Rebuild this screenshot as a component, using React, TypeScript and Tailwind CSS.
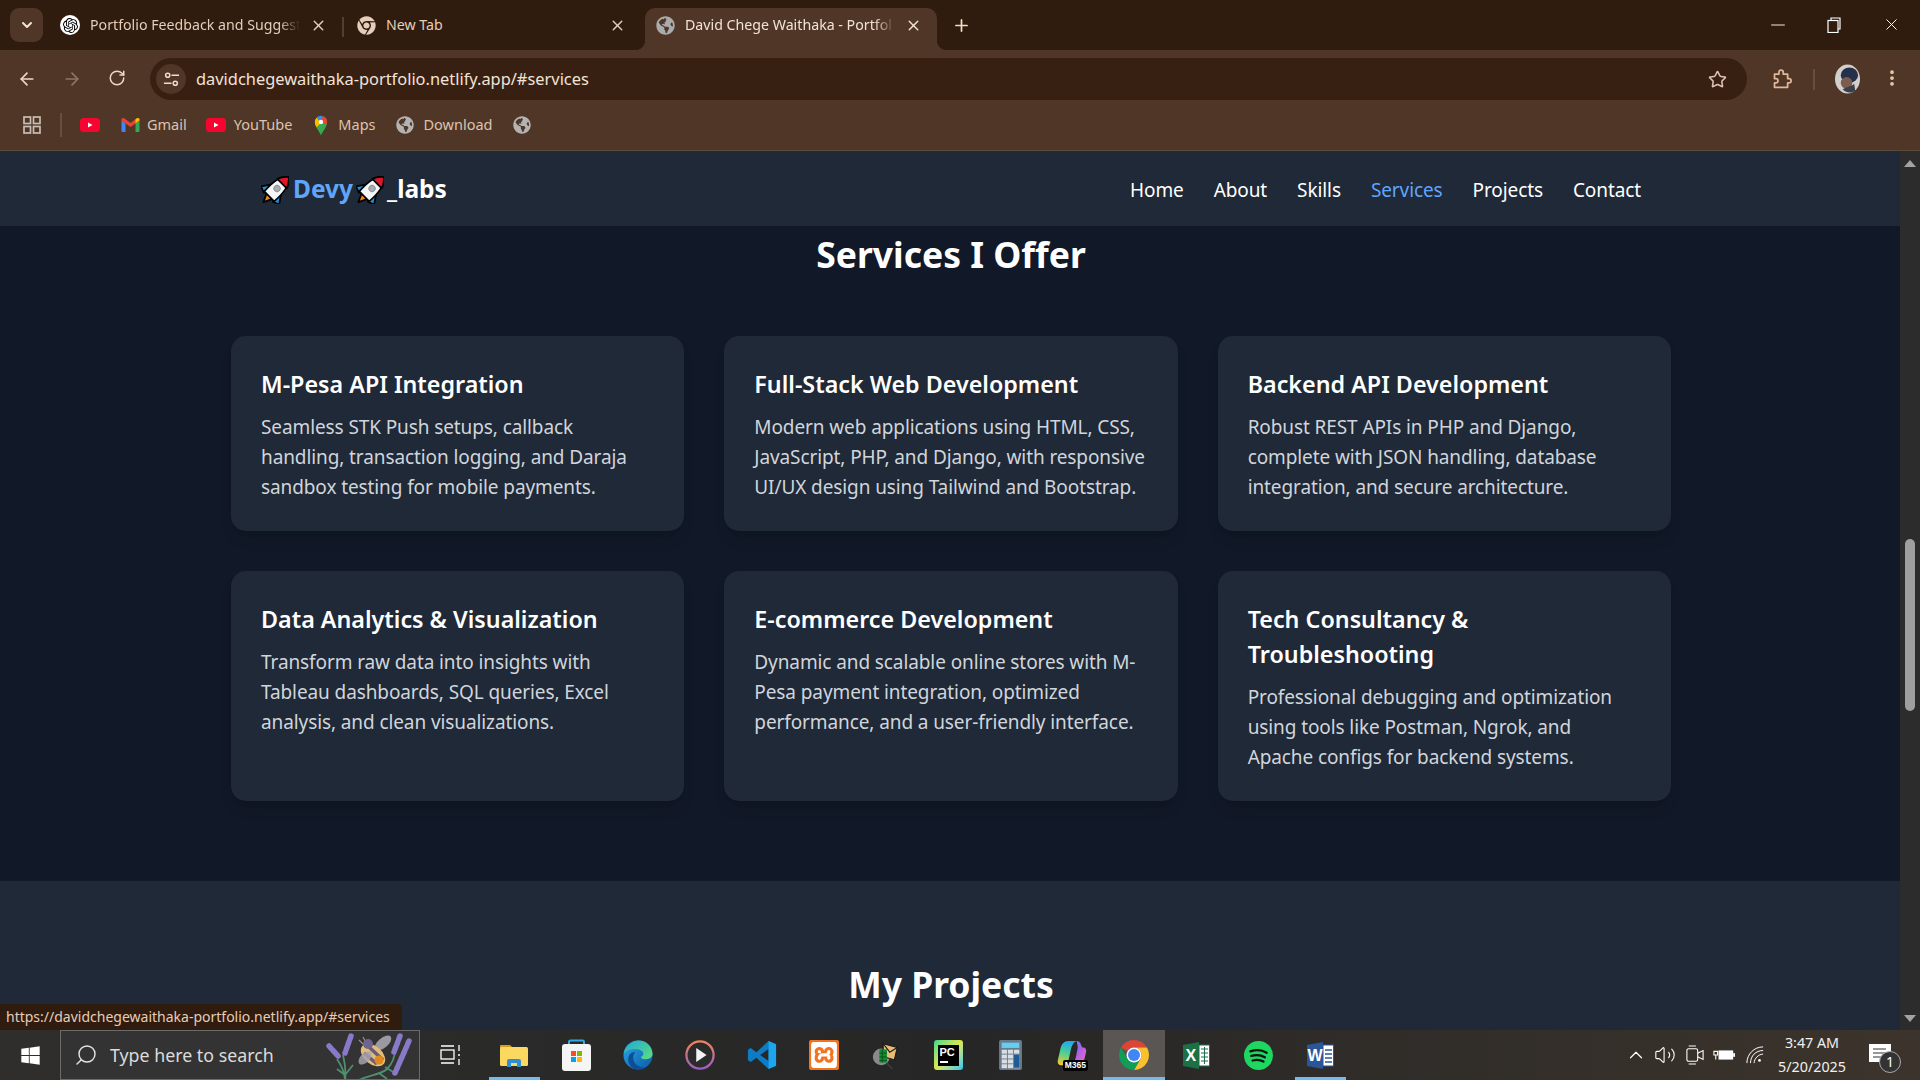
import React from "react";
import { ArrowLeft, ArrowRight, RotateCw, Star, EllipsisVertical, X, Plus, ChevronDown, Search, ChevronUp, Volume2, Minus } from "lucide-react";
import { FaGlobeAmericas, FaChrome, FaWindows } from "react-icons/fa";
import { SiOpenai, SiXampp } from "react-icons/si";

const services = [
  { t: "M-Pesa API Integration", d: "Seamless STK Push setups, callback handling, transaction logging, and Daraja sandbox testing for mobile payments." },
  { t: "Full-Stack Web Development", d: "Modern web applications using HTML, CSS, JavaScript, PHP, and Django, with responsive UI/UX design using Tailwind and Bootstrap." },
  { t: "Backend API Development", d: "Robust REST APIs in PHP and Django, complete with JSON handling, database integration, and secure architecture." },
  { t: "Data Analytics & Visualization", d: "Transform raw data into insights with Tableau dashboards, SQL queries, Excel analysis, and clean visualizations." },
  { t: "E-commerce Development", d: "Dynamic and scalable online stores with M-Pesa payment integration, optimized performance, and a user-friendly interface." },
  { t: "Tech Consultancy & Troubleshooting", d: "Professional debugging and optimization using tools like Postman, Ngrok, and Apache configs for backend systems." },
];

function Rocket() {
  return (
    <svg viewBox="1.500 1 24 24" className="w-[28px] h-[28px] shrink-0">
      <g transform="rotate(45 13.5 13.5)" stroke="#000" strokeWidth="1.500" strokeLinejoin="round">
        <path d="M10 20h7l-3.500 7.500z" fill="#f08a1c" />
        <path d="M8 11.500L2.500 19.500 8 21.500zM19 11.500l5.500 8-5.500 2z" fill="#1f8fe0" />
        <path d="M13.500 -3C18.500 .5 20.500 8 19.500 20.500h-12C6.500 8 8.500 .5 13.500 -3z" fill="#f4f6f8" />
        <path d="M13.500 -3C16.200 -1 18.200 2 19.200 5H7.800C8.800 2 10.800 -1 13.500 -3z" fill="#e0162b" />
        <circle cx="13.500" cy="11" r="2.800" fill="#a8adb3" strokeWidth=".6" stroke="#777" />
      </g>
    </svg>
  );
}

function YouTubeIcon() {
  return (
    <svg viewBox="0 0 20 14" className="w-[20px] h-[14px] shrink-0">
      <rect width="20" height="14" rx="3.500" fill="#f5052f" />
      <path d="M8 4.500l4.500 2.500L8 9.500z" fill="#fff" />
    </svg>
  );
}

function GmailIcon() {
  return (
    <svg viewBox="0 0 18 14" className="w-[19px] h-[14px] shrink-0">
      <path d="M0 2.500L4 5.500 9 9l5-3.500 4-3v-1C18 0 16-.5 15 .5L9 5 3 .5C2-.5 0 0 0 1.500z" fill="#ea4335" />
      <path d="M14 5.500l4-3v-1C18 0 16-.5 15 .5l-1 .8z" fill="#fbbc04" />
      <path d="M0 2.500V13a1 1 0 001 1h3V5.500z" fill="#4285f4" />
      <path d="M18 2.500V13a1 1 0 01-1 1h-3V5.500z" fill="#34a853" />
    </svg>
  );
}

function MapsIcon() {
  return (
    <svg viewBox="0 0 16 24" className="w-[14px] h-[21px] shrink-0">
      <path d="M8 23.500C6 18 1 14 1 8a7 7 0 0114 0c0 6-5 10-7 15.500z" fill="#34a853" />
      <path d="M3 3a7 7 0 017-1.700L8 8 5 5z" fill="#4285f4" />
      <path d="M10 1.300A7 7 0 0115 8c0 1-.2 2-.5 2.800L8 8z" fill="#ea4335" />
      <path d="M1 8c0 2 .8 4 2 6l5-5-5-6a7 7 0 00-2 5z" fill="#fbbc04" />
      <circle cx="8" cy="8" r="2.500" fill="#fff" />
    </svg>
  );
}

function ChromeLogo() {
  return (
    <svg viewBox="4 4 40 40" className="w-[30px] h-[30px]">
      <path d="M24 4a20 20 0 0117.320 10H24a10 10 0 00-8.660 5L6.680 14A20 20 0 0124 4z" fill="#db4437" />
      <path d="M41.320 14A20 20 0 0124 44l8.660-15A10 10 0 0024 14z" fill="#fbc02d" />
      <path d="M24 44A20 20 0 016.680 14l8.660 15a10 10 0 0017.320 0z" fill="#0f9d58" />
      <circle cx="24" cy="24" r="10" fill="#fff" />
      <circle cx="24" cy="24" r="8" fill="#4285f4" />
    </svg>
  );
}

const taskIcons: { key: string; el: React.ReactNode; active?: boolean; open?: boolean }[] = [
  {
    key: "explorer", open: true,
    el: (
      <svg viewBox="0 0 28 24" className="w-[28px] h-[24px]">
        <path d="M0 3a1 1 0 011-1h9l3 3H0z" fill="#d8a019" />
        <rect y="4" width="28" height="19" rx="1.500" fill="#fbd860" />
        <path d="M7 24v-6a2 2 0 012-2h10a2 2 0 012 2v6h-4v-4h-6v4z" fill="#2f8fd6" />
      </svg>
    ),
  },
  {
    key: "store",
    el: (
      <svg viewBox="0 0 29 32" className="w-[29px] h-[32px]">
        <path d="M7 8V3a1.500 1.500 0 011.500-1.500h12A1.500 1.500 0 0122 3v5" fill="none" stroke="#35a9e8" strokeWidth="2" />
        <rect y="5" width="29" height="27" rx="3" fill="#f5f5f5" />
        <rect x="9" y="12" width="5" height="5" fill="#f25022" />
        <rect x="15" y="12" width="5" height="5" fill="#7fba00" />
        <rect x="9" y="18" width="5" height="5" fill="#00a4ef" />
        <rect x="15" y="18" width="5" height="5" fill="#ffb900" />
      </svg>
    ),
  },
  {
    key: "edge",
    el: (
      <svg viewBox="0 0 32 32" className="w-[30px] h-[30px]">
        <defs>
          <linearGradient id="edgeA" x1="0" y1="0" x2="1" y2="1">
            <stop offset="0" stopColor="#2aa8e8" />
            <stop offset="1" stopColor="#0c59a4" />
          </linearGradient>
          <linearGradient id="edgeB" x1="0" y1="0" x2="1" y2="1">
            <stop offset="0" stopColor="#1fa8d8" />
            <stop offset="1" stopColor="#5fe07a" />
          </linearGradient>
        </defs>
        <circle cx="16" cy="16" r="15.500" fill="url(#edgeA)" />
        <path d="M1 14C3 5 11 .5 17 .5c8 0 14.500 6.500 14.500 14.500 0 3-3 5.500-7 5.500-3 0-5-1-5.500-2.500 3-1 3.500-4 1.500-6C16 8 6 9 1 14z" fill="url(#edgeB)" />
        <path d="M13 13c-3 3-3 9 1 13 2 2 6 4 11 3-2 1.500-5 2.500-9 2.500-3 0-5-1-6-2-4-3-6-9-3-14 2-2 4-3 6-2.500z" fill="#0b4f97" />
      </svg>
    ),
  },
  {
    key: "player",
    el: (
      <svg viewBox="0 0 32 32" className="w-[30px] h-[30px]">
        <defs>
          <linearGradient id="playG" x1="0" y1="0" x2="0" y2="1">
            <stop offset="0" stopColor="#f0845a" />
            <stop offset="1" stopColor="#9a5fc0" />
          </linearGradient>
        </defs>
        <circle cx="16" cy="16" r="14.500" fill="#2b2b2b" stroke="url(#playG)" strokeWidth="2.400" />
        <path d="M12 8.500l11 7.500-11 7.500z" fill="#f3f3f3" />
      </svg>
    ),
  },
  {
    key: "vscode",
    el: (
      <svg viewBox="0 0 32 32" className="w-[30px] h-[30px]">
        <path d="M23 1L10 13 4 8.500 1 10.500v11L4 23.500 10 19l13 12 8-3.500v-23zM23 9.500v13L14 16z" fill="#0e7cc4" />
        <path d="M23 1l8 3.500v23L23 31z" fill="#1ea5ef" />
      </svg>
    ),
  },
  {
    key: "xampp",
    el: (
      <span className="w-[30px] h-[30px] bg-[#f27420] rounded-[2px] flex items-center justify-center text-white">
        <SiXampp className="w-[26px] h-[26px]" />
      </span>
    ),
  },
  {
    key: "wire",
    el: (
      <svg viewBox="0 0 32 32" className="w-[30px] h-[30px]">
        <circle cx="11" cy="18" r="9" fill="#8a8a8a" />
        <path d="M13 4l15 4-3 13-12-3z" fill="#e8bc72" stroke="#1a1a1a" strokeWidth="1.200" />
        <path d="M13 4l7 9 8-5" fill="none" stroke="#1a1a1a" strokeWidth="1.200" />
        <rect x="9" y="10" width="8" height="14" fill="#128a2f" />
        <path d="M9 14h8M9 18h8M9 22h8M12 10v14" stroke="#0a4a1a" strokeWidth=".8" />
        <path d="M17 25l6 6" stroke="#3a3a3a" strokeWidth="2" />
      </svg>
    ),
  },
  {
    key: "pycharm",
    el: (
      <span className="w-[29px] h-[30px] flex items-center justify-center bg-linear-to-br from-[#21d789] via-[#d9e84a] to-[#07c3f2] rounded-[3px]">
        <span className="w-[21px] h-[21px] bg-black flex flex-col pl-[2px] pt-[1px] text-white text-[11px] leading-[12px] font-bold font-['Liberation_Sans',sans-serif]">
          PC
          <span className="block w-[8px] h-[2px] bg-white mt-[3px]" />
        </span>
      </span>
    ),
  },
  {
    key: "calc",
    el: (
      <svg viewBox="0 0 26 34" className="w-[23px] h-[30px]">
        <rect width="26" height="34" rx="2" fill="#69798a" />
        <rect x="3" y="3" width="20" height="6" fill="#63d0f0" />
        {[0, 1, 2].map((r) =>
          [0, 1, 2, 3].map((c) => (
            <rect key={`${r}${c}`} x={3 + r * 7} y={11 + c * 5.500} width="6" height="4.500" fill="#d8dee4" />
          ))
        )}
        <rect x="17" y="16.500" width="6" height="15" fill="#1d5a96" />
      </svg>
    ),
  },
  {
    key: "m365",
    el: (
      <span className="relative w-[30px] h-[30px] block">
        <svg viewBox="0 0 32 32" className="w-[30px] h-[30px]">
          <defs>
            <linearGradient id="m1" x1="0" y1="0" x2="1" y2="1">
              <stop offset="0" stopColor="#3f8cf0" />
              <stop offset="0.5" stopColor="#b060e8" />
              <stop offset="1" stopColor="#f070b0" />
            </linearGradient>
            <linearGradient id="m2" x1="0.500" y1="0" x2="0.300" y2="1">
              <stop offset="0" stopColor="#20a8f0" />
              <stop offset="0.5" stopColor="#50d090" />
              <stop offset="1" stopColor="#f7c52c" />
            </linearGradient>
          </defs>
          <path d="M12 1h9c-3 1-5 4-6 8l-3 14c-1 3-4 4-7 4-3 0-5-2-4-6l3-13C5 4 8 1 12 1z" fill="url(#m2)" />
          <path d="M21 1c3 0 4 2 5 5l1 2h1c3 0 3.500 3 3 5l-2 8c-1 3-3 4-6 4h-7c2-1 3-3 4-6l2-10c.5-3-1-6-1-8z" fill="url(#m1)" />
        </svg>
        <span className="absolute right-[-1px] bottom-[-1px] bg-black text-white text-[8.500px] leading-[11px] px-[2px] rounded-[2px] font-bold font-['Liberation_Sans',sans-serif]">M365</span>
      </span>
    ),
  },
  { key: "chrome", active: true, open: true, el: <ChromeLogo /> },
  {
    key: "excel",
    el: (
      <span className="relative w-[27px] h-[27px] flex items-center">
        <svg viewBox="0 0 27 27" className="w-[27px] h-[27px]">
          <path d="M0 3l16-3v27L0 24z" fill="#1b7145" />
          <rect x="16" y="3" width="10.500" height="21" fill="#fff" stroke="#1b7145" />
          <path d="M18 7h7M18 11h7M18 15h7M18 19h7M21.500 5v17" stroke="#1b7145" strokeWidth="1" />
        </svg>
        <span className="absolute left-[3px] top-[4px] text-white text-[16px] leading-[19px] font-bold font-['Liberation_Sans',sans-serif]">X</span>
      </span>
    ),
  },
  {
    key: "spotify",
    el: (
      <svg viewBox="0 0 32 32" className="w-[29px] h-[29px]">
        <circle cx="16" cy="16" r="16" fill="#1ed760" />
        <path d="M7 11.500c6-2 13-1.500 18 1.500M8 16.500c5-1.500 11-1 15 1.500M9.500 21.500c4-1 8.500-.8 12 1.200" fill="none" stroke="#111" strokeWidth="2.500" strokeLinecap="round" />
      </svg>
    ),
  },
  {
    key: "word", open: true,
    el: (
      <span className="relative w-[27px] h-[27px] flex items-center">
        <svg viewBox="0 0 27 27" className="w-[27px] h-[27px]">
          <path d="M0 3l16-3v27L0 24z" fill="#2a5699" />
          <rect x="16" y="3" width="10.500" height="21" fill="#fff" stroke="#2a5699" />
          <path d="M18 8h7M18 12h7M18 16h7M18 20h7" stroke="#2a5699" strokeWidth="1.500" />
        </svg>
        <span className="absolute left-[1px] top-[4px] text-white text-[16px] leading-[19px] font-bold font-['Liberation_Sans',sans-serif]">W</span>
      </span>
    ),
  },
];

function Tab({ icon, title, w, active, fade }: { icon: React.ReactNode; title: string; w: number; active?: boolean; fade?: boolean }) {
  return (
    <div className={active ? "relative h-[42px] mt-[8px] w-[292px] ml-[19px] bg-[#4f3626] rounded-t-[10px] flex items-center pl-[10px] pb-[8px] shrink-0" : "flex items-center h-[34px] shrink-0"}>
      <span className="w-[20px] h-[20px] flex items-center justify-center shrink-0">{icon}</span>
      <span
        style={{ width: w }}
        className={`ml-[10px] whitespace-nowrap text-[14.200px] ${fade ? "[mask-image:linear-gradient(to_right,black_90%,transparent)]" : ""} ${active ? "text-[#f3e3d7]" : "text-[#e6cdb9]"}`}
      >
        {title}
      </span>
      <X className={`ml-[10px] w-[17px] h-[17px] shrink-0 ${active ? "text-[#f3e3d7]" : "text-[#e6cdb9]"}`} strokeWidth={2} />
      {active && (
        <>
          <span className="absolute left-[-10px] bottom-0 w-[10px] h-[10px] bg-[radial-gradient(circle_at_0_0,transparent_10px,#4f3626_10.5px)]" />
          <span className="absolute right-[-10px] bottom-0 w-[10px] h-[10px] bg-[radial-gradient(circle_at_100%_0,transparent_10px,#4f3626_10.5px)]" />
        </>
      )}
    </div>
  );
}

function Bookmark({ icon, label, ml, gap = "ml-[8px]" }: { icon: React.ReactNode; label?: string; ml: string; gap?: string }) {
  return (
    <div className={`flex items-center shrink-0 ${ml}`}>
      {icon}
      {label && <span className={`${gap} text-[14.500px] text-[#dcc3af]`}>{label}</span>}
    </div>
  );
}

export default function App() {
  return (
    <div className="w-[1920px] h-[1080px] overflow-hidden flex flex-col font-['Noto_Sans',sans-serif] bg-[#111827]">
      {/* tab strip */}
      <div className="h-[50px] bg-[#2f1c0e] flex items-start shrink-0">
        <div className="ml-[10px] mt-[8px] w-[33px] h-[34px] rounded-[9px] bg-[#4f3626] flex items-center justify-center shrink-0">
          <ChevronDown className="w-[16px] h-[16px] text-[#f3e3d7]" strokeWidth={3} />
        </div>
        <div className="ml-[17px] mt-[8px] flex items-center">
          <Tab
            w={210}
            fade
            title="Portfolio Feedback and Suggest"
            icon={
              <span className="w-[20px] h-[20px] rounded-full bg-white flex items-center justify-center">
                <SiOpenai className="w-[15px] h-[15px] text-black" />
              </span>
            }
          />
        </div>
        <span className="ml-[15px] mt-[17px] w-[2px] h-[20px] bg-[#573d2b] shrink-0" />
        <div className="ml-[12px] mt-[8px] flex items-center">
          <Tab w={213} title="New Tab" icon={<FaChrome className="w-[19px] h-[19px] text-[#e6cdb9]" />} />
        </div>
        <Tab w={210} active fade title="David Chege Waithaka - Portfol" icon={<FaGlobeAmericas className="w-[19px] h-[19px] text-[#a9abad]" />} />
        <Plus className="ml-[15px] mt-[16px] w-[19px] h-[19px] text-[#f3dcc9] shrink-0" strokeWidth={2.200} />
        <div className="ml-auto flex items-start text-white">
          <Minus className="mt-[14px] w-[22px] h-[22px]" strokeWidth={1} />
          <svg viewBox="0 0 14 16" className="ml-[38px] mt-[17px] w-[14px] h-[16px]" fill="none" stroke="#fff" strokeWidth="1.200">
            <rect x="1" y="3.500" width="10" height="12" />
            <path d="M4 3.500V1h9v11h-2" />
          </svg>
          <X className="ml-[41px] mr-[19px] mt-[15px] w-[19px] h-[19px] text-white" strokeWidth={1.200} />
        </div>
      </div>

      {/* toolbar */}
      <div className="h-[50px] bg-[#4f3626] flex items-start shrink-0">
        <ArrowLeft className="ml-[17px] mt-[19px] w-[20px] h-[20px] text-[#edd7c6] shrink-0" strokeWidth={2} />
        <ArrowRight className="ml-[25px] mt-[19px] w-[20px] h-[20px] text-[#8f7564] shrink-0" strokeWidth={2} />
        <RotateCw className="ml-[26px] mt-[19px] w-[18px] h-[18px] text-[#edd7c6] shrink-0" strokeWidth={2} />
        <div className="ml-[24px] mt-[8px] w-[1597px] h-[42px] rounded-[21px] bg-[#372012] flex items-center shrink-0">
          <span className="ml-[6px] w-[30px] h-[30px] rounded-full bg-[#4f3626] flex items-center justify-center shrink-0">
            <svg viewBox="0 0 18 18" className="w-[17px] h-[17px]" fill="none" stroke="#f0dccb" strokeWidth="1.600">
              <circle cx="5" cy="4.500" r="2.200" />
              <path d="M9 4.500h8M1 13h8" />
              <circle cx="13" cy="13" r="2.200" />
            </svg>
          </span>
          <span className="ml-[10px] pt-[1px] text-[16.400px] text-[#f3e3d7] whitespace-nowrap">davidchegewaithaka-portfolio.netlify.app/#services</span>
          <Star className="ml-auto mr-[20px] w-[19px] h-[19px] text-[#dcc3af]" strokeWidth={2} />
        </div>
        <svg viewBox="0 0 24 24" className="ml-[24px] mt-[18px] w-[21px] h-[21px] shrink-0" fill="none" stroke="#e0b79a" strokeWidth="2" strokeLinejoin="round">
          <path d="M4 7h5V5a2.500 2.500 0 015 0v2h5v5h1.500a2.500 2.500 0 010 5H19v5H4v-5h1.500a2.500 2.500 0 000-5H4z" />
        </svg>
        <span className="ml-[21px] mt-[19px] w-[2px] h-[21px] bg-[#6b4e3a] shrink-0" />
        <svg viewBox="0 0 26 30" className="ml-[20px] mt-[14px] w-[25px] h-[30px] shrink-0">
          <ellipse cx="13" cy="15" rx="13" ry="15" fill="#d2d0cc" />
          <ellipse cx="15" cy="11" rx="9" ry="8" fill="#27304a" />
          <ellipse cx="12" cy="19" rx="6" ry="6" fill="#7d5c50" />
          <path d="M8 26c4-3 9-3 12-6l1 7c-3 3-9 3-13-1z" fill="#3a3f4a" />
        </svg>
        <EllipsisVertical className="ml-[22px] mt-[15px] w-[20px] h-[26px] text-[#edc9ad] shrink-0" strokeWidth={2.500} />
      </div>

      {/* bookmarks */}
      <div className="h-[51px] bg-[#4f3626] border-b border-[#5c4a3e] flex items-center shrink-0">
        <svg viewBox="0 0 18 18" className="ml-[23px] w-[18px] h-[18px] shrink-0" fill="none" stroke="#c9bdb4" strokeWidth="1.700">
          <rect x="1" y="1" width="6.500" height="6.500" />
          <rect x="10.500" y="1" width="6.500" height="6.500" />
          <rect x="1" y="10.500" width="6.500" height="6.500" />
          <rect x="10.500" y="10.500" width="6.500" height="6.500" />
        </svg>
        <span className="ml-[19px] w-[2px] h-[24px] bg-[#6b4e3a] shrink-0" />
        <Bookmark ml="ml-[18px]" icon={<YouTubeIcon />} />
        <Bookmark ml="ml-[21px]" gap="ml-[7px]" icon={<GmailIcon />} label="Gmail" />
        <Bookmark ml="ml-[19px]" icon={<YouTubeIcon />} label="YouTube" />
        <Bookmark ml="ml-[22px]" gap="ml-[10px]" icon={<MapsIcon />} label="Maps" />
        <Bookmark ml="ml-[20px]" gap="ml-[10px]" icon={<FaGlobeAmericas className="w-[18px] h-[18px] text-[#b3b3b3]" />} label="Download" />
        <Bookmark ml="ml-[20px]" icon={<FaGlobeAmericas className="w-[18px] h-[18px] text-[#b3b3b3]" />} />
      </div>

      {/* viewport */}
      <div className="relative flex-1 min-h-0 flex">
        <div className="flex-1 min-w-0 overflow-hidden flex flex-col">
          <nav className="h-[75px] bg-[#1f2937] shrink-0 pl-[2px]">
            <div className="max-w-[1440px] mx-auto px-[30px] pt-[2px] h-full flex items-center justify-between">
              <div className="flex items-center text-[24.500px] font-bold text-white">
                <Rocket />
                <span className="text-[#60a5fa] ml-[4px]">Devy</span>
                <span className="ml-[3px]"><Rocket /></span>
                <span className="ml-[3px]">_labs</span>
              </div>
              <div className="flex items-center gap-[30px] pt-[2px] text-[19px] tracking-[-0.1px] text-white">
                <span>Home</span>
                <span>About</span>
                <span>Skills</span>
                <span className="text-[#60a5fa]">Services</span>
                <span>Projects</span>
                <span>Contact</span>
              </div>
            </div>
          </nav>

          <section className="bg-[#111827] pt-[6px] pb-[80px] shrink-0 pl-[2px]">
            <h2 className="text-center text-[35.500px] leading-[45px] font-bold text-white mb-[59px]">Services I Offer</h2>
            <div className="max-w-[1440px] mx-auto grid grid-cols-3 gap-[40px]">
              {services.map((s) => (
                <div key={s.t} className="bg-[#1f2937] rounded-[15px] px-[30px] pt-[31px] pb-[29px] shadow-lg">
                  <h3 className="text-[23.300px] leading-[35px] font-semibold text-white mb-[10px]">{s.t}</h3>
                  <p className="text-[19px] tracking-[-0.1px] leading-[30px] text-[#d1d5db]">{s.d}</p>
                </div>
              ))}
            </div>
          </section>

          <section className="bg-[#1f2937] pt-[81px] flex-1 pl-[2px]">
            <h2 className="text-center text-[35.500px] leading-[45px] font-bold text-white">My Projects</h2>
          </section>
        </div>

        {/* scrollbar */}
        <div className="w-[20px] bg-[#2c2c2c] flex flex-col items-center shrink-0">
          <span className="mt-[9px] w-0 h-0 border-x-[6px] border-x-transparent border-b-[7px] border-b-[#a3a3a3]" />
          <span className="mt-[372px] w-[10px] h-[172px] rounded-[5px] bg-[#9f9f9f]" />
          <span className="mt-auto mb-[8px] w-0 h-0 border-x-[6px] border-x-transparent border-t-[7px] border-t-[#a3a3a3]" />
        </div>

        {/* status bubble */}
        <div className="absolute left-0 bottom-0 h-[26px] w-[402px] bg-[#2f1c0e] rounded-tr-[4px] flex items-center pl-[6px] pb-[2px] text-[14px] text-[#e6cdb9] whitespace-nowrap">
          https://davidchegewaithaka-portfolio.netlify.app/#services
        </div>
      </div>

      {/* taskbar */}
      <div className="h-[50px] bg-linear-to-r from-[#2f2e2d] via-[#262626] to-[#3c342c] flex items-stretch shrink-0">
        <div className="w-[60px] flex items-center justify-center shrink-0">
          <FaWindows className="w-[21px] h-[21px] text-white" />
        </div>
        <div className="w-[360px] bg-[#333333] border border-[#6b6b6b] flex items-center relative overflow-hidden shrink-0">
          <Search className="ml-[13px] w-[24px] h-[24px] text-[#e5e5e5] -scale-x-100" strokeWidth={1.400} />
          <span className="ml-[12px] text-[17.800px] text-[#dcdcdc]">Type here to search</span>
          <svg viewBox="0 0 100 50" className="absolute right-0 top-0 w-[100px] h-[50px]">
            <path d="M18 28c4 6 8 14 8 22M24 24c2 8 3 18 2 26M38 50c10-6 24-6 30-12 6-6 8-14 8-20M60 42l8 6M66 36l10 6M18 38l8 6M34 34l-8 10" stroke="#4f8f6f" strokeWidth="1.800" fill="none" />
            <path d="M10 15l9 10M32 5l-6 17M81 5l-6 16M90 10L76 42" stroke="#8879c9" strokeWidth="5.500" strokeLinecap="round" strokeDasharray="3.500 2" fill="none" />
            <path d="M40 9l6 6M44 6l3 6" stroke="#9a8f88" strokeWidth="1.200" />
            <ellipse cx="64" cy="12" rx="10" ry="5" fill="#9b9aa3" transform="rotate(-40 64 12)" />
            <ellipse cx="54" cy="24" rx="14" ry="9" fill="#e0bd78" transform="rotate(40 54 24)" />
            <path d="M50 16l14 13M45 22l13 11" stroke="#6d5a78" strokeWidth="3.500" />
            <ellipse cx="49" cy="13" rx="5" ry="5" fill="#6f6390" />
            <circle cx="60" cy="29" r="4.500" fill="#e08a1e" />
            <ellipse cx="46" cy="27" rx="8" ry="4.500" fill="#a3a2ab" opacity=".85" transform="rotate(-45 46 27)" />
          </svg>
        </div>
        <div className="w-[62px] flex items-center justify-center shrink-0">
          <svg viewBox="0 0 22 22" className="w-[22px] h-[22px]" fill="none" stroke="#fff" strokeWidth="1.300">
            <rect x="1" y="6" width="13" height="9" />
            <path d="M1 2h13M1 19h13M19 1v6M19 15v6" />
            <circle cx="19" cy="11" r="1" fill="#fff" stroke="none" />
          </svg>
        </div>
        <div className="ml-[1px] flex items-stretch shrink-0">
          {taskIcons.map((i) => (
            <div key={i.key} className={`relative w-[62px] flex items-center justify-center shrink-0 ${i.active ? "bg-[#5a5653]" : ""}`}>
              {i.el}
              {i.open && <span className={`absolute bottom-0 h-[3px] bg-[#76b9ed] ${i.active ? "left-0 right-0" : "left-[6px] right-[5px]"}`} />}
            </div>
          ))}
        </div>
        <div className="ml-auto flex items-center text-white shrink-0">
          <ChevronUp className="w-[22px] h-[22px]" strokeWidth={1.300} />
          <Volume2 className="ml-[7px] w-[22px] h-[22px]" strokeWidth={1.200} />
          <svg viewBox="0 0 20 24" className="ml-[10px] w-[18px] h-[22px]" fill="none" stroke="#fff" strokeWidth="1.200">
            <rect x="1" y="5" width="12" height="14" rx="2" />
            <path d="M13 10l6-3v10l-6-3M3 2h8M3 22h8" />
          </svg>
          <svg viewBox="0 0 24 14" className="ml-[9px] w-[22px] h-[14px]">
            <rect x="6" y="2" width="16" height="10" fill="#fff" />
            <rect x="22" y="5" width="2" height="4" fill="#fff" />
            <path d="M1 3h4v4H1zM3 7v5" stroke="#fff" fill="none" strokeWidth="1.200" />
          </svg>
          <svg viewBox="0 0 20 20" className="ml-[11px] w-[18px] h-[18px]" fill="none" stroke="#fff" strokeWidth="1.100">
            <path d="M1 19C1 9 9 1 19 1M5 19c0-8 6-14 14-14M9 19c0-5 5-10 10-10" />
            <circle cx="15" cy="16" r="1.500" fill="#fff" stroke="none" />
          </svg>
          <div className="ml-[9px] w-[78px] text-center text-[14.300px] leading-[24px] text-[#f0f0f0]">
            <div>3:47 AM</div>
            <div>5/20/2025</div>
          </div>
          <div className="relative ml-[18px] mr-[29px] w-[22px] h-[22px]">
            <svg viewBox="0 0 22 22" className="w-[22px] h-[22px]">
              <path d="M0 0h22v18H0z" fill="#fff" />
              <path d="M4 5h13M4 9h13M4 13h9" stroke="#333" strokeWidth="1.200" />
            </svg>
            <span className="absolute -right-[10px] -bottom-[7px] w-[22px] h-[22px] rounded-full bg-[#333] border border-[#aaa] flex items-center justify-center text-[14px] leading-none text-white">1</span>
          </div>
        </div>
      </div>
    </div>
  );
}
